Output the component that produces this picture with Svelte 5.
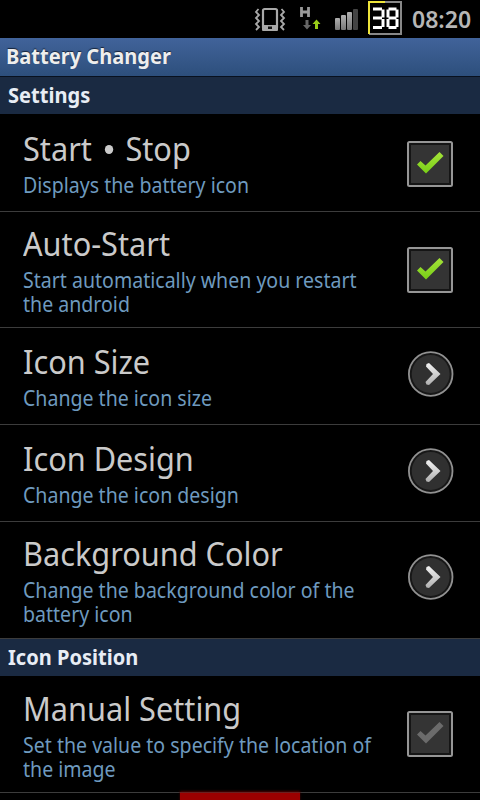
<script>
  const sections = [
    {
      name: 'Settings',
      items: [
        { title: 'Start・Stop', lines: ['Displays the battery icon'], type: 'check', on: true },
        { title: 'Auto-Start', lines: ['Start automatically when you restart', 'the android'], type: 'check', on: true },
        { title: 'Icon Size', lines: ['Change the icon size'], type: 'more' },
        { title: 'Icon Design', lines: ['Change the icon design'], type: 'more' },
        { title: 'Background Color', lines: ['Change the background color of the', 'battery icon'], type: 'more' }
      ]
    },
    {
      name: 'Icon Position',
      items: [
        { title: 'Manual Setting', lines: ['Set the value to specify the location of', 'the image'], type: 'check', on: false }
      ]
    }
  ];
</script>

<div class="screen">
  <div class="status">
    <svg class="vibrate" width="32" height="26" viewBox="0 0 32 26">
      <g fill="none" stroke="#a9a9a9" stroke-width="1.8">
        <path d="M4.500 2 2 5 5 8 2 11 5 14 2 17 5 20 2 23M27.500 2l2.500 3-3 3 3 3-3 3 3 3-3 3 3 3" />
        <rect x="9" y="2" width="14" height="20" rx="1.5" stroke-width="2.2" />
      </g>
      <path d="M8 18h16v5q0 1-1 1H9q-1 0-1-1z" fill="#a9a9a9" />
      <rect x="14" y="19.5" width="4" height="2.5" fill="#111" />
    </svg>
    <svg class="data" width="22" height="24" viewBox="0 0 22 24">
      <path d="M2.500 1v10M9.500 1v10M2.500 6h7" fill="none" stroke="#999" stroke-width="2.8" />
      <path d="M6.500 14h3v5H12l-4 4.500L4 19h2.500z" fill="#666" />
      <path d="M16 23v-5h-2.500l4-4.500 4 4.500H19v5z" fill="#99cc18" />
    </svg>
    <svg class="signal" width="24" height="22" viewBox="0 0 24 22">
      <defs>
        <linearGradient id="bars" x1="0" y1="0" x2="0" y2="1">
          <stop offset="0" stop-color="#b0b0b0" />
          <stop offset="1" stop-color="#777" />
        </linearGradient>
      </defs>
      <rect x="0" y="10" width="5" height="12" rx="1" fill="url(#bars)" />
      <rect x="6" y="7" width="5" height="15" rx="1" fill="url(#bars)" />
      <rect x="12" y="4" width="5" height="18" rx="1" fill="url(#bars)" />
      <rect x="18" y="1" width="5" height="21" rx="1" fill="#444" />
    </svg>
    <svg class="battery" width="34" height="34" viewBox="0 0 34 34" role="img" aria-label="38">
      <g fill="none" stroke-width="2">
        <path d="M17 1h16v32H1" stroke="#888" />
        <path d="M17 1H1v32" stroke="#eee43a" />
      </g>
      <g fill="none" stroke="#fff" stroke-width="3">
        <path d="M5 8h9M5 17h9M5 26.500h9M20.500 8h8M20.500 17h8M20.500 26.500h8" />
        <path d="M15 8.500v8M15 18v8M20 8.500v8M20 18v8M29 8.500v8M29 18v8" />
      </g>
    </svg>
    <span class="clock">08:20</span>
  </div>

  <div class="titlebar"><span>Battery Changer</span></div>

  {#each sections as section}
    <div class="header"><span>{section.name}</span></div>
    {#each section.items as item}
      <div class="row" class:tall={item.lines.length > 1} class:more={item.type === 'more'}>
        <div class="text">
          <div class="title">
            {#each item.title.split('・') as part, i}{#if i > 0}<i class="dot"></i>{/if}{part}{/each}
          </div>
          <div class="summary">
            {#each item.lines as line, i}{#if i > 0}<br />{/if}{line}{/each}
          </div>
        </div>
        {#if item.type === 'check'}
          <svg class="widget" width="46" height="46" viewBox="0 0 46 46">
            <defs>
              <linearGradient id="tick" x1="0" y1="0" x2="0" y2="1">
                <stop offset="0" stop-color="#a5e33a" />
                <stop offset="1" stop-color="#78cf16" />
              </linearGradient>
            </defs>
            <rect x="1" y="1" width="44" height="44" rx="1.5" fill="#151515" stroke="#969696" stroke-width="2" />
            <rect x="4" y="4" width="38" height="38" fill="#343434" />
            <path d="M10 23.500 13.500 20 18.500 24.500 32.500 11 36.500 15 19 32.500z" fill={item.on ? 'url(#tick)' : '#6b6b6b'} />
          </svg>
        {:else}
          <svg class="widget" width="46" height="46" viewBox="0 0 46 46">
            <defs>
              <linearGradient id="arrow" x1="0" y1="0" x2="0" y2="1">
                <stop offset="0" stop-color="#f2f2f2" />
                <stop offset="1" stop-color="#b0b0b0" />
              </linearGradient>
            </defs>
            <circle cx="22.7" cy="23" r="21.8" fill="#171717" stroke="#919191" stroke-width="1.8" />
            <circle cx="22.7" cy="23" r="19" fill="#303030" />
            <path d="M18 15.500 18.500 13 21 12 32.500 23 21 34 18.500 33.500 17.500 31 25 23z" fill="url(#arrow)" />
          </svg>
        {/if}
      </div>
    {/each}
  {/each}
  <div class="next"></div>
</div>

<style>
  :global(body) {
    background: #000;
    overflow: hidden;
  }

  .screen {
    width: 480px;
    height: 800px;
    overflow: hidden;
    display: flex;
    flex-direction: column;
    background: #000;
    font-family: "Noto Sans", "Open Sans", sans-serif;
    white-space: nowrap;
  }

  .screen > * {
    flex: none;
    box-sizing: border-box;
  }

  .status {
    height: 38px;
    display: flex;
    align-items: flex-start;
    padding-left: 254px;
  }

  .vibrate {
    margin-top: 7px;
  }

  .data {
    margin: 6px 0 0 13px;
  }

  .signal {
    margin: 8px 0 0 14px;
  }

  .battery {
    margin: 1px 0 0 9px;
  }

  .clock {
    margin-left: 10px;
    color: #b6b6b6;
    font-size: 24px;
    font-weight: 600;
    line-height: 38px;
    transform: scaleX(0.96);
    transform-origin: left;
  }

  .titlebar {
    height: 39px;
    padding-left: 6px;
    line-height: 37px;
    font-size: 21px;
    font-weight: 700;
    color: #eee;
    text-shadow: 0 -1px 1px #16243a;
    background: linear-gradient(#41639a, #2d4f7c);
    border-bottom: 1px solid #08111f;
  }

  .header {
    height: 37px;
    padding-left: 8px;
    line-height: 37px;
    font-size: 21px;
    font-weight: 700;
    color: #e8edf5;
    background: #1a2a42;
  }

  .titlebar span,
  .header span {
    display: inline-block;
    transform: scaleX(0.955);
    transform-origin: left;
  }

  .row {
    height: 98px;
    padding: 17px 27px 0 23px;
    display: flex;
    justify-content: space-between;
    border-bottom: 1px solid #3c3c3c;
  }

  .row.more {
    height: 97px;
    padding-top: 15px;
    padding-right: 26px;
  }

  .row.tall {
    height: 116px;
    padding-top: 14px;
  }

  .row.tall.more {
    height: 117px;
  }

  /* the last row is followed by the .next sliver */
  .row.tall:nth-last-child(2) {
    height: 117px;
    padding-top: 15px;
  }

  .widget {
    margin-top: 10px;
  }

  .more .widget {
    margin-top: 8px;
  }

  .tall .widget {
    margin-top: 21px;
  }

  .tall:nth-last-child(2) .widget {
    margin-top: 20px;
  }

  .tall.more .widget {
    margin-top: 18px;
  }

  .title {
    height: 42px;
    line-height: 36px;
    font-size: 33px;
    color: #cacaca;
    transform: scaleX(0.93);
    transform-origin: left;
  }

  .more:not(.tall) .title {
    height: 43px;
    line-height: 38px;
  }

  .dot {
    display: inline-block;
    width: 9px;
    height: 9px;
    margin: 0 13px 0 14px;
    border-radius: 50%;
    background: #cacaca;
    vertical-align: 7px;
  }

  .summary {
    line-height: 24px;
    font-size: 21px;
    color: #6e9abf;
    transform: scaleX(0.931);
    transform-origin: left;
  }

  .next {
    width: 120px;
    height: 10px;
    margin-top: -1px;
    margin-left: 180px;
    background: #9b0000;
    border-top: 1px solid #6b2020;
    box-shadow: 0 -1px 2px #500000;
  }
</style>
